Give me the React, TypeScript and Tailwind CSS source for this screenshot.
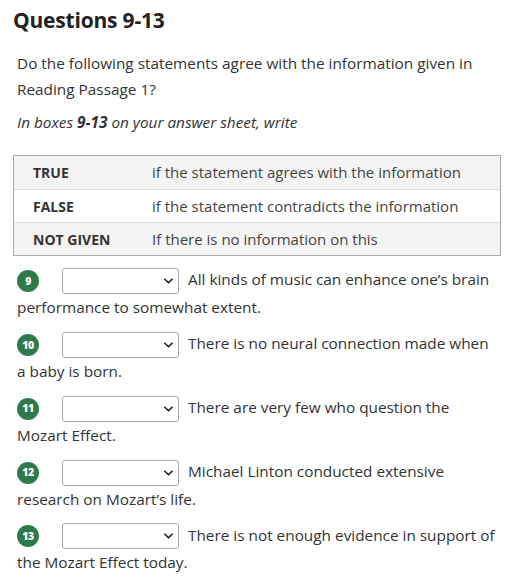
const rows = [
  { term: "TRUE", desc: "if the statement agrees with the information" },
  { term: "FALSE", desc: "if the statement contradicts the information" },
  { term: "NOT GIVEN", desc: "If there is no information on this" },
];

const questions = [
  { n: 9, text: "All kinds of music can enhance one’s brain performance to somewhat extent." },
  { n: 10, text: "There is no neural connection made when a baby is born." },
  { n: 11, text: "There are very few who question the Mozart Effect." },
  { n: 12, text: "Michael Linton conducted extensive research on Mozart’s life." },
  { n: 13, text: "There is not enough evidence in support of the Mozart Effect today." },
];

function Chevron() {
  return (
    <svg viewBox="0 0 10 6" className="h-[6px] w-[9px]" fill="none" stroke="#222" strokeWidth="1.8" strokeLinecap="round" strokeLinejoin="round">
      <path d="M1 1l4 4 4-4" />
    </svg>
  );
}

export default function App() {
  return (
    <div className="min-h-[583px] bg-white px-[17px] text-[#333] font-['Open_Sans',sans-serif] text-[15.35px]">
      <h1 className="pt-[7px] -ml-[4px] text-[21px] font-bold leading-[26px] text-[#222] tracking-[-0.2px]">
        Questions 9-13
      </h1>
      <p className="mt-[17px] leading-[26px]">
        Do the following statements agree with the information given in Reading Passage 1?
      </p>
      <p className="mt-[7px] leading-[26px] italic">
        In boxes <b className="font-bold">9-13</b> on your answer sheet, write
      </p>
      <div className="mt-[20px] -ml-[4px] mr-[-4px] border border-[#aaa] text-[15px]">
        {rows.map((r, i) => (
          <div
            key={r.term}
            className={`flex h-[33px] items-center ${i % 2 === 0 ? "bg-[#f4f4f4]" : "bg-white"} ${i > 0 ? "border-t border-[#ddd]" : ""}`}
          >
            <span className="w-[138px] shrink-0 pl-[19px] font-bold text-[14px] text-[#333]">{r.term}</span>
            <span className="text-[#444]">{r.desc}</span>
          </div>
        ))}
      </div>
      <div className="mt-[10px]">
        {questions.map((q) => (
          <p key={q.n} className="mb-[9px] leading-[27px]">
            <span className="mr-[23px] inline-flex h-[22px] w-[22px] items-center justify-center rounded-full bg-[#2f7a4a] align-middle text-[10.5px] leading-none font-extrabold tracking-[-0.5px] text-white">
              {q.n}
            </span>
            <span className="mr-[9px] inline-flex h-[26px] w-[117px] items-center justify-end rounded-[3px] border border-[#aaa] bg-white pr-[5px] align-middle">
              <Chevron />
            </span>
            {q.text}
          </p>
        ))}
      </div>
    </div>
  );
}
